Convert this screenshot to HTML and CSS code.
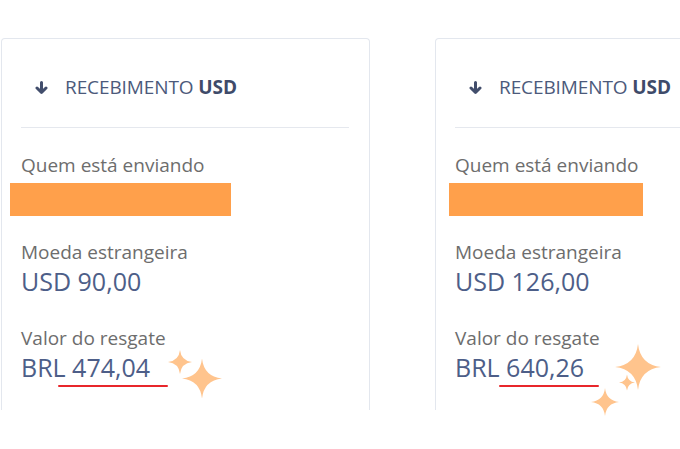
FILE: index.html
```html
<!DOCTYPE html>
<html lang="pt-BR">
<head>
<meta charset="utf-8">
<link rel="stylesheet" href="styles.css">
</head>
<body>
<div class="page">
  <div class="cards">
    <section class="card">
      <header class="card-head">
        <svg class="arrow" width="13" height="13" viewBox="0 0 13 13"><path d="M6.5 1.6V11M2 7 6.5 11.3 11 7" fill="none" stroke="currentColor" stroke-width="3" stroke-linecap="round" stroke-linejoin="round"/></svg>
        <span class="title">RECEBIMENTO <b>USD</b></span>
      </header>
      <div class="body">
        <div class="label first">Quem está enviando</div>
        <div class="redact r1"></div>
        <div class="label gap1">Moeda estrangeira</div>
        <div class="value">USD 90,00</div>
        <div class="label gap2">Valor do resgate</div>
        <div class="value">BRL 474,04</div>
      </div>
      <div class="underline u1"></div>
    </section>
    <section class="card">
      <header class="card-head">
        <svg class="arrow" width="13" height="13" viewBox="0 0 13 13"><path d="M6.5 1.6V11M2 7 6.5 11.3 11 7" fill="none" stroke="currentColor" stroke-width="3" stroke-linecap="round" stroke-linejoin="round"/></svg>
        <span class="title">RECEBIMENTO <b>USD</b></span>
      </header>
      <div class="body">
        <div class="label first">Quem está enviando</div>
        <div class="redact r2"></div>
        <div class="label gap1">Moeda estrangeira</div>
        <div class="value">USD 126,00</div>
        <div class="label gap2">Valor do resgate</div>
        <div class="value">BRL 640,26</div>
      </div>
      <div class="underline u2"></div>
    </section>
  </div>
  <svg class="sparkle s1" viewBox="-1 -1 2 2"><path d="M0 -1Q0.1 -0.1 1 0Q0.1 0.1 0 1Q-0.1 0.1 -1 0Q-0.1 -0.1 0 -1Z"/></svg>
  <svg class="sparkle s2" viewBox="-1 -1 2 2"><path d="M0 -1Q0.1 -0.1 1 0Q0.1 0.1 0 1Q-0.1 0.1 -1 0Q-0.1 -0.1 0 -1Z"/></svg>
  <svg class="sparkle s3" viewBox="-1 -1 2 2"><path d="M0 -1Q0.1 -0.1 1 0Q0.1 0.1 0 1Q-0.1 0.1 -1 0Q-0.1 -0.1 0 -1Z"/></svg>
  <svg class="sparkle s4" viewBox="-1 -1 2 2"><path d="M0 -1Q0.1 -0.1 1 0Q0.1 0.1 0 1Q-0.1 0.1 -1 0Q-0.1 -0.1 0 -1Z"/></svg>
  <svg class="sparkle s5" viewBox="-1 -1 2 2"><path d="M0 -1Q0.1 -0.1 1 0Q0.1 0.1 0 1Q-0.1 0.1 -1 0Q-0.1 -0.1 0 -1Z"/></svg>
</div>
</body>
</html>
```
FILE: styles.css
```css
html, body {
  margin: 0;
  padding: 0;
  background: #ffffff;
  overflow: hidden;
  width: 680px;
  height: 449px;
}
.page {
  position: relative;
  width: 680px;
  height: 449px;
  font-family: "Open Sans", "Noto Sans", sans-serif;
}
.cards {
  display: flex;
  gap: 65px;
  padding: 38px 0 0 1px;
}
.card {
  position: relative;
  flex: 0 0 auto;
  width: 369px;
  height: 372px;
  border: 1px solid #e3e7ee;
  border-bottom: none;
  border-radius: 4px 4px 0 0;
  padding: 0 20px 0 19px;
  box-sizing: border-box;
  background: #fff;
}
.card-head {
  display: flex;
  align-items: center;
  gap: 17px;
  padding: 37px 14px 29px;
  line-height: 22px;
  border-bottom: 1px solid #e5e8ee;
}
.arrow {
  flex: 0 0 auto;
  color: #424e6c;
}
.title {
  font-size: 19px;
  color: #4c5a7b;
  letter-spacing: -0.1px;
}
.title b {
  font-weight: 700;
  color: #3f4b6a;
}
.label {
  font-size: 19px;
  line-height: 24px;
  color: #6d6d6d;
}
.first {
  margin-top: 25px;
}
.redact {
  height: 33px;
  margin-top: 6px;
  background: #ffa04b;
}
.r1 { width: 221px; margin-left: -11px; }
.r2 { width: 194px; margin-left: -6px; }
.gap1 { margin-top: 24px; }
.gap2 { margin-top: 29px; }
.value {
  margin-top: 1px;
  font-size: 25px;
  line-height: 32px;
  color: #4d5e88;
}
.underline {
  position: absolute;
  top: 346px;
  height: 2px;
  background: #e8262b;
  border-radius: 1px;
}
.u1 { left: 56px; width: 110px; }
.u2 { left: 63px; width: 100px; }
.sparkle {
  position: absolute;
  fill: #ffc48d;
}
.s1 { left: 168px; top: 349px; width: 24px; height: 26px; }
.s2 { left: 182px; top: 357px; width: 40px; height: 43px; }
.s3 { left: 615px; top: 343px; width: 46px; height: 48px; }
.s4 { left: 619px; top: 374px; width: 16px; height: 17px; }
.s5 { left: 591px; top: 388px; width: 28px; height: 28px; }
```
